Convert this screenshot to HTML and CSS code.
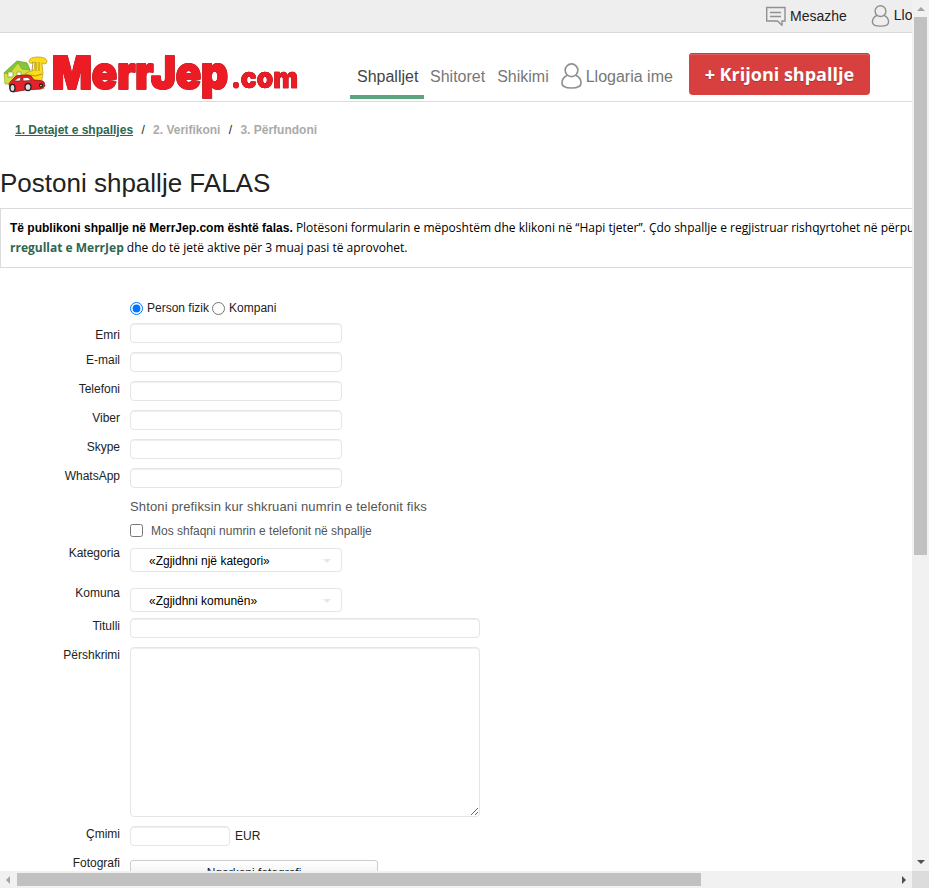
FILE: index.html
```html
<!DOCTYPE html>
<html lang="sq">
<head>
<meta charset="utf-8">
<title>MerrJep.com</title>
<link rel="stylesheet" href="styles.css">
</head>
<body>
<svg class="defs" width="0" height="0"><symbol id="user" viewBox="0 0 20 25"><circle cx="10" cy="7" r="6.100"/><path d="M6 11.800C2.500 13.500.8 16.300.8 19.200c0 3.600 3.600 4.800 9.200 4.800s9.200-1.200 9.200-4.800c0-2.900-1.700-5.700-5.200-7.400"/></symbol></svg>
<div class="window">
  <div class="page">
    <div class="topbar">
      <a class="toplink"><svg class="msg" viewBox="0 0 20 20"><path d="M.7 1.500h18.300v13.500h-3v4.300l-4.500-4.300H.7zM4 6.500h11M4 10.500h11"/></svg><span>Mesazhe</span></a>
      <a class="toplink account"><svg class="user-small"><use href="#user"/></svg><span>Llogaria ime</span></a>
    </div>
    <header class="header">
      <svg class="logo" viewBox="0 0 310 50">
        <path class="house" d="M4 23L17 11l10 2 3 7-3 14H5z"/><path class="roof" d="M4 23L17 11l10 2 3 7-8-1-4-6-9 11z"/><path class="pane" d="M8 22h5v5H8zM17 22h4v4h-4z"/>
        <path class="chair" d="M29 11q1-4 9-4 8 0 9 4 0 3-3 3l-2-1 1 11-1 5 2 10-3-1-1-5-13-2-3-5 2-3 8-3 1-8q-6 3-6-1z"/><path class="bars" d="M33 12l-1 9M36 12v9M39 12v9M25 24l10 2 7-2"/>
        <path class="car" d="M9 34l2-3 5-5q8-2 15 0l3 4q8 0 10 2l1 4-4 3-16 1-12 2-3-3z"/><path class="glass" d="M14 31l4-3 3-.5-1 3.500zM23 27.500h5l3 3-8 .5z"/>
        <ellipse class="tyre" cx="12.500" cy="38" rx="2.500" ry="3.700"/><ellipse class="tyre" cx="28" cy="37" rx="3" ry="3.500"/><circle class="tyre" cx="41" cy="35.500" r="1.500"/>
        <text class="word" x="52" y="39" textLength="176" lengthAdjust="spacingAndGlyphs">MerrJep</text>
        <text class="suffix" x="231" y="38" textLength="67" lengthAdjust="spacingAndGlyphs">.com</text>
      </svg>
      <nav class="nav">
        <a class="tab active">Shpalljet</a><a class="tab">Shitoret</a><a class="tab">Shikimi</a>
        <a class="tab profile"><svg class="user-big"><use href="#user"/></svg>Llogaria ime</a>
      </nav>
      <a class="create">+ Krijoni shpallje</a>
    </header>
    <div class="steps"><b class="current">1. Detajet e shpalljes</b><span class="sep">/</span><b>2. Verifikoni</b><span class="sep">/</span><b>3. Përfundoni</b></div>
    <h1 class="title">Postoni shpallje FALAS</h1>
    <div class="notice"><div><b class="lead">Të publikoni shpallje në MerrJep.com është falas.</b> <span>Plotësoni formularin e mëposhtëm dhe klikoni në “Hapi tjeter”. Çdo shpallje e regjistruar rishqyrtohet në përputhje me</span></div><div><b class="rules">rregullat e MerrJep</b> <span>dhe do të jetë aktive për 3 muaj pasi të aprovohet.</span></div></div>
    <form class="form">
      <div class="row kind"><input type="radio" name="k" checked><span>Person fizik</span><input type="radio" name="k"><span>Kompani</span></div>
      <div class="row first"><label>Emri</label><input class="field"></div>
      <div class="row"><label>E-mail</label><input class="field"></div>
      <div class="row"><label>Telefoni</label><input class="field"></div>
      <div class="row"><label>Viber</label><input class="field"></div>
      <div class="row"><label>Skype</label><input class="field"></div>
      <div class="row"><label>WhatsApp</label><input class="field"></div>
      <div class="hint">Shtoni prefiksin kur shkruani numrin e telefonit fiks</div>
      <div class="check"><input type="checkbox"><span>Mos shfaqni numrin e telefonit në shpallje</span></div>
      <div class="row pick"><label>Kategoria</label><div class="select"><span>«Zgjidhni një kategori»</span><i class="caret"></i></div></div>
      <div class="row pick town"><label>Komuna</label><div class="select"><span>«Zgjidhni komunën»</span><i class="caret"></i></div></div>
      <div class="row"><label>Titulli</label><input class="field wide"></div>
      <div class="row desc"><label>Përshkrimi</label><textarea class="field wide area"></textarea></div>
      <div class="row"><label>Çmimi</label><input class="field price"><span class="unit">EUR</span></div>
      <div class="row photo"><label>Fotografi</label><button type="button" class="upload">Ngarkoni fotografi</button></div>
    </form>
  </div>
  <div class="vbar"><i class="up"></i><div class="vthumb"></div><i class="down"></i></div>
  <div class="hbar"><i class="left"></i><div class="hthumb"></div><i class="right"></i></div>
  <div class="corner"></div>
</div>
</body>
</html>
```
FILE: styles.css
```css
* { box-sizing: border-box; }
body { margin: 0; overflow: hidden; background: #fff; color: #222; font: 12px/18px "Liberation Sans", Arial, sans-serif; }
.defs { display: block; }
.window { display: grid; grid-template: 871px 17px / 912px 17px; width: 929px; height: 888px; }
.page { overflow: hidden; min-width: 0; }
.topbar { display: flex; height: 33px; padding-left: 766px; gap: 24px; background: #eee; border-bottom: 1px solid #d9d9d9; color: #222; font-size: 14px; line-height: 32px; white-space: nowrap; }
.toplink { display: flex; flex: none; gap: 4px; }
.account { gap: 4px; line-height: 30px; }
svg { fill: none; stroke: #909090; }
.msg { width: 20px; height: 20px; margin-top: 6px; stroke-width: 1.4; }
.user-small { width: 19px; height: 22px; margin-top: 5px; stroke-width: 1.6; }
.header { display: flex; height: 69px; border-bottom: 1px solid #ddd; white-space: nowrap; }
.logo { width: 310px; height: 50px; margin-top: 17px; flex: none; font-family: Inter, sans-serif; }
.house { fill: #d3df3b; stroke: #8ab52d; stroke-width: .7; }
.roof { fill: #86c340; stroke: #669b31; stroke-width: .5; }
.pane { fill: #fff; stroke: #879f2c; stroke-width: .7; }
.chair { fill: #fbdc19; stroke: #b59622; stroke-width: .7; }
.bars { stroke: #9c801c; stroke-width: .8; }
.car { fill: #e62129; stroke: #87131a; stroke-width: .8; }
.glass { fill: #fff; stroke: #772020; stroke-width: .7; }
.tyre { fill: #ddd; stroke: #222; stroke-width: 1.3; }
.word, .suffix { fill: #ed1c24; stroke: #ed1c24; stroke-linejoin: round; font-weight: 900; filter: drop-shadow(0 0 .4px #50191b); }
.word { font-size: 45px; stroke-width: 1.8; }
.suffix { font-size: 29px; stroke-width: .6; }
.nav { display: flex; margin: 22px 0 0 40px; color: #777; font-size: 16px; line-height: 43px; }
.tab { height: 44px; margin-right: 12px; }
.active { width: 74px; padding-left: 7px; margin-right: 6px; color: #444; border-bottom: 4px solid #5aa580; }
.profile { display: flex; gap: 4px; margin-right: 0; }
.user-big { width: 21px; height: 26px; margin-top: 8px; stroke-width: 1.6; }
.create { width: 181px; height: 42px; margin: 20px 0 0 16px; border-radius: 4px; background: #d84040; box-shadow: inset 0 1px #d33434, inset 0 2px #e06060; color: #fff; font: bold 18px/43px "Open Sans", sans-serif; text-align: center; text-shadow: 0 1px 1px #a33; }
.steps { display: flex; padding: 19px 15px 0; color: #aaa; }
.sep { width: 20px; text-align: center; color: #222; }
.current { color: #2e6650; text-decoration: underline; }
.title { margin: 30px 0 11px; font-size: 26px; font-weight: 400; line-height: 28px; color: #222; }
.notice { height: 60px; padding: 9px; border: 1px solid #dadadf; border-right: 0; font: 12px/20px "Open Sans", sans-serif; color: #000; white-space: nowrap; }
.lead { font-family: "Liberation Sans", Arial, sans-serif; }
.rules { color: #2e6650; }
.form { padding-top: 31px; }
.row { display: flex; height: 29px; }
.row label { width: 120px; margin-right: 10px; text-align: right; line-height: 16px; }
.kind { height: 24px; padding-left: 130px; line-height: 18px; }
.kind input { width: 13px; height: 13px; margin: 3px 4px 0 0; }
.kind input + span { margin-right: 3px; }
.first label { line-height: 24px; }
.field { width: 212px; height: 20px; margin: 0; padding: 0; background: #fff; border: 1px solid #e5e5e5; border-radius: 4px; box-shadow: inset 0 1px 1px #eee; outline: none; }
.hint { height: 25px; padding-left: 130px; font-size: 13px; line-height: 20px; letter-spacing: .135px; color: #555; }
.check { display: flex; height: 26px; padding-left: 130px; line-height: 18px; color: #555; }
.check input { width: 13px; height: 13px; margin: 2px 8px 0 0; }
.pick { height: 40px; }
.pick label { line-height: 10px; }
.town { height: 30px; }
.select { display: flex; align-items: center; justify-content: space-between; width: 212px; height: 24px; padding: 1px 10px 0 18px; border: 1px solid #e5e5e5; border-radius: 3px; color: #000; }
.caret { border: 4px solid transparent; border-top-color: #e8e8e8; border-bottom: 0; }
.wide { width: 350px; }
.desc { height: 179px; }
.area { height: 170px; resize: both; }
.price { width: 100px; }
.unit { margin-left: 5px; line-height: 20px; }
.photo { height: 30px; }
.upload { width: 248px; height: 26px; margin: 5px 0 0; padding: 0; border: 1px solid #ccc; border-radius: 3px; background: linear-gradient(#fff, #e8e8e8); font: 12px/24px "Liberation Sans", sans-serif; color: #222; }
.vbar, .hbar { display: flex; align-items: center; background: #f1f1f1; }
.vbar { flex-direction: column; }
.vbar i, .hbar i { border: 4px solid transparent; }
.vbar .up { border-top: 0; border-bottom-color: #a3a3a3; margin: 7px 0 6px; }
.vthumb { width: 13px; height: 538px; background: #c1c1c1; }
.vbar .down { border-bottom: 0; border-top-color: #505050; margin: auto 0 7px; }
.hbar .left { border-left: 0; border-right-color: #a3a3a3; margin: 0 7px 0 6px; }
.hthumb { width: 684px; height: 13px; background: #c1c1c1; }
.hbar .right { border-right: 0; border-left-color: #505050; margin: 0 6px 0 auto; }
.corner { background: #dcdcdc; }
```
